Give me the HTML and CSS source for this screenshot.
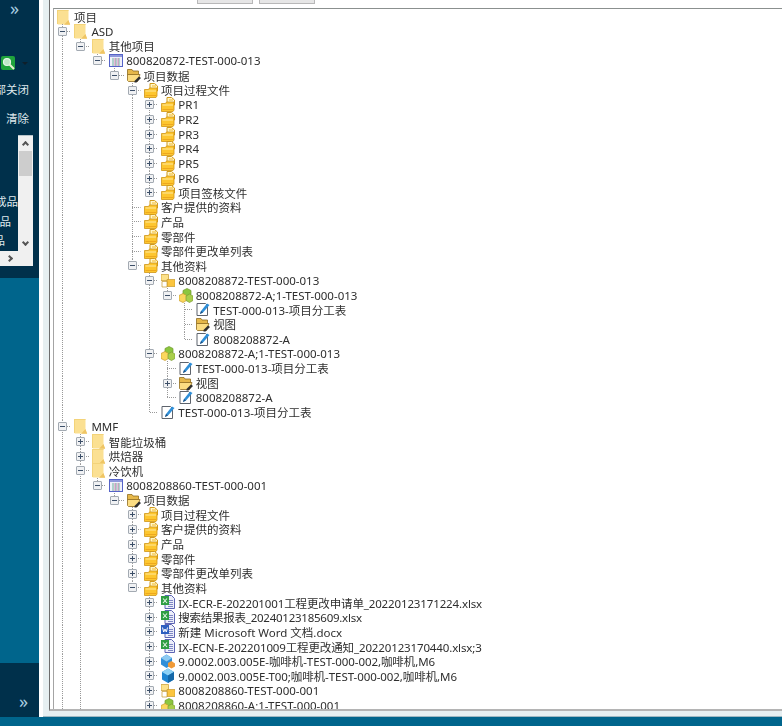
FILE: index.html
```html
<!DOCTYPE html>
<html lang="zh-CN">
<head>
    <meta charset="UTF-8">
    <title>项目</title>
    <link rel="stylesheet" href="styles.css">
</head>
<body>
    <!-- icons used by the tree -->
    <svg class="defs" xmlns="http://www.w3.org/2000/svg">
        <symbol id="pale" viewBox="0 0 14 15">
            <path d="M0 0h11.500v11l1.500 3.500H1l-1-1z" fill="#fbe092"/>
            <path d="M11.500 10l1.700 4.700H7z" fill="#efc564"/>
            <path d="M0 .5h11.500M.5 0v14" stroke="#f3d379" fill="none"/>
        </symbol>
        <symbol id="yellow" viewBox="0 0 14 15">
            <path d="M6 .5h4.500l3 2.500v5H6z" fill="#fff6c8" stroke="#d19a1c"/>
            <path d="M8 3h4" stroke="#f4b82c"/>
            <path d="M.5 6.500h4l1-1.500h7.500v8l-1 1.500H.5z" fill="#fdc62f" stroke="#cf9618" stroke-width=".8"/>
            <path d="M1.500 8h10.500" stroke="#ffeaa0"/>
            <path d="M1.500 12.500h10.500" stroke="#eea81e"/>
        </symbol>
        <symbol id="open" viewBox="0 0 14 15">
            <path d="M.5 1.500h4.500l1 1.500h5.500v4H.5z" fill="#e6b84a" stroke="#8f6c20" stroke-width=".8"/>
            <path d="M.5 12.500V6.500h12.500l-2.500 7H1.500z" fill="#fcdd82" stroke="#8f6c20" stroke-width=".8"/>
            <path d="M7.500 13l4.500-4.500 2 1.500-4.500 4.500H7.500z" fill="#2f2f2f"/>
        </symbol>
        <symbol id="proj" viewBox="0 0 14 15">
            <rect x=".5" y="1.500" width="13" height="12" fill="#eef0fa" stroke="#5563c8"/>
            <path d="M1 2h12v2H1z" fill="#8d97dc"/>
            <path d="M3 6h9M3 8h9M3 10h9M3 12h9" stroke="#6fb49c" stroke-dasharray="2 1"/>
            <path d="M6 5v8M9 5v8" stroke="#d070a8" stroke-width=".8"/>
        </symbol>
        <symbol id="ybox" viewBox="0 0 14 15">
            <path d="M0 1.500h7.500v6H0z" fill="#fde28a" stroke="#c69a2c" stroke-width=".7"/>
            <path d="M6 6.500h8v7H6z" fill="#fbc53f" stroke="#c69a2c" stroke-width=".7"/>
            <path d="M1 8.500h5v5.500H1z" fill="#fff" stroke="#c69a2c" stroke-width=".7"/>
        </symbol>
        <symbol id="gbox" viewBox="0 0 14 15">
            <path d="M4 2.500l4-2 4 2v4l-4 2-4-2z" fill="#8cc63f" stroke="#6d9a2c" stroke-width=".7"/>
            <path d="M0 7.500l4-2 3.500 2v5l-3.500 2-4-2z" fill="#fbd75e" stroke="#c69a2c" stroke-width=".7"/>
            <path d="M7 8l3.500-2 3.500 2v4.500l-3.500 2L7 12.500z" fill="#a9cf4b" stroke="#7c9c34" stroke-width=".7"/>
        </symbol>
        <symbol id="doc" viewBox="0 0 14 15">
            <path d="M1 1.500h8.500l2 2v10H1z" fill="#fff" stroke="#5d636c"/>
            <path d="M4 12l1-3 6-7.500 2.500 1.500-6.500 7.500z" fill="#2f8fd8"/>
            <path d="M4 12l1-3 2 1.500z" fill="#1d4f80"/>
        </symbol>
        <symbol id="xls" viewBox="0 0 14 15">
            <path d="M4 .5h6.500l3 3v10H4z" fill="#eceefa" stroke="#5d65b4"/>
            <path d="M7 5.500h5M7 7.500h5M7 9.500h5M7 11.500h5" stroke="#7f88c4"/>
            <rect x="0" y="1" width="8" height="9" fill="#2f9e44"/>
            <path d="M2 3.500l4 4.500M6 3.500l-4 4.500" stroke="#e8f6ea" stroke-width="1.100"/>
        </symbol>
        <symbol id="word" viewBox="0 0 14 15">
            <path d="M4 .5h6.500l3 3v10H4z" fill="#eceefa" stroke="#5d65b4"/>
            <path d="M7 5.500h5M7 7.500h5M7 9.500h5M7 11.500h5" stroke="#7f88c4"/>
            <rect x="0" y="1" width="8" height="9" fill="#2d5fc0"/>
            <path d="M1.500 3.500l1.200 4.500 1.300-3 1.300 3 1.200-4.500" stroke="#fff" fill="none"/>
        </symbol>
        <symbol id="part" viewBox="0 0 14 15">
            <path d="M0 4l5.500-3.500L11 4v6.500l-5.500 3.500L0 10.500z" fill="#2f8ed8"/>
            <path d="M0 4l5.500 3.500L11 4 5.500.5z" fill="#8ccaf2"/>
            <path d="M7 9l3.500-2 3.500 2.500v3l-3.500 2-3.500-2z" fill="#f09a38"/>
        </symbol>
        <symbol id="cube" viewBox="0 0 14 15">
            <path d="M1 4l6-3.500L13 4v7.500L7 15l-6-3.500z" fill="#1f86d2"/>
            <path d="M1 4l6 3.500L13 4 7 .5z" fill="#8ed2f6"/>
            <path d="M7 7.500V15l6-3.500V4z" fill="#1568a8"/>
        </symbol>
    </svg>

    <div class="screen">
        <aside class="sidebar">
            <div class="side-top">
                <div class="chevrons">»</div>
                <div class="tool-search">
                    <svg class="search-icon" viewBox="0 0 14 14">
                        <rect width="14" height="14" rx="2" fill="#1fa33c"/>
                        <circle cx="6" cy="6" r="3.500" fill="#bfe8c8" stroke="#e8f6ea" stroke-width="1.200"/>
                        <path d="M8.500 8.500l4.500 4.500" stroke="#e8f0d0" stroke-width="2"/>
                    </svg>
                    <span class="caret"></span>
                </div>
                <div class="side-btn close-all">全部关闭</div>
                <div class="side-btn clear">清除</div>
                <div class="list-box">
                    <div class="list-main">
                        <div class="list-items">
                            <div class="item-a">半成品</div>
                            <div class="item-b">半成品</div>
                            <div class="item-c">半成品</div>
                        </div>
                        <div class="vscroll">
                            <span class="arrow up"></span>
                            <span class="thumb"></span>
                            <span class="arrow down"></span>
                        </div>
                    </div>
                    <div class="hscroll"><span class="arrow right"></span></div>
                </div>
            </div>
            <div class="side-mid"></div>
            <div class="side-foot">»</div>
        </aside>

        <main class="content">
            <div class="pane">
                <div class="pane-inner">
                    <div class="toolbar">
                        <span class="tool-btn"></span>
                        <span class="tool-btn"></span>
                    </div>
                    <div class="tree">
                        <div class="row root"><svg class="ic"><use href="#pale"/></svg><span>项目</span></div>
                        <div class="row"><i class="tee"><b class="minus"></b></i><svg class="ic"><use href="#pale"/></svg><span>ASD</span></div>
                        <div class="row"><i class="v"></i><i class="last"><b class="minus"></b></i><svg class="ic"><use href="#pale"/></svg><span>其他项目</span></div>
                        <div class="row"><i class="v"></i><i></i><i class="last"><b class="minus"></b></i><svg class="ic"><use href="#proj"/></svg><span>800820872-TEST-000-013</span></div>
                        <div class="row"><i class="v"></i><i></i><i></i><i class="last"><b class="minus"></b></i><svg class="ic"><use href="#open"/></svg><span>项目数据</span></div>
                        <div class="row"><i class="v"></i><i></i><i></i><i></i><i class="tee"><b class="minus"></b></i><svg class="ic"><use href="#yellow"/></svg><span>项目过程文件</span></div>
                        <div class="row"><i class="v"></i><i></i><i></i><i></i><i class="v"></i><i class="tee"><b class="plus"></b></i><svg class="ic"><use href="#yellow"/></svg><span>PR1</span></div>
                        <div class="row"><i class="v"></i><i></i><i></i><i></i><i class="v"></i><i class="tee"><b class="plus"></b></i><svg class="ic"><use href="#yellow"/></svg><span>PR2</span></div>
                        <div class="row"><i class="v"></i><i></i><i></i><i></i><i class="v"></i><i class="tee"><b class="plus"></b></i><svg class="ic"><use href="#yellow"/></svg><span>PR3</span></div>
                        <div class="row"><i class="v"></i><i></i><i></i><i></i><i class="v"></i><i class="tee"><b class="plus"></b></i><svg class="ic"><use href="#yellow"/></svg><span>PR4</span></div>
                        <div class="row"><i class="v"></i><i></i><i></i><i></i><i class="v"></i><i class="tee"><b class="plus"></b></i><svg class="ic"><use href="#yellow"/></svg><span>PR5</span></div>
                        <div class="row"><i class="v"></i><i></i><i></i><i></i><i class="v"></i><i class="tee"><b class="plus"></b></i><svg class="ic"><use href="#yellow"/></svg><span>PR6</span></div>
                        <div class="row"><i class="v"></i><i></i><i></i><i></i><i class="v"></i><i class="last"><b class="plus"></b></i><svg class="ic"><use href="#yellow"/></svg><span>项目签核文件</span></div>
                        <div class="row"><i class="v"></i><i></i><i></i><i></i><i class="tee"></i><svg class="ic"><use href="#yellow"/></svg><span>客户提供的资料</span></div>
                        <div class="row"><i class="v"></i><i></i><i></i><i></i><i class="tee"></i><svg class="ic"><use href="#yellow"/></svg><span>产品</span></div>
                        <div class="row"><i class="v"></i><i></i><i></i><i></i><i class="tee"></i><svg class="ic"><use href="#yellow"/></svg><span>零部件</span></div>
                        <div class="row"><i class="v"></i><i></i><i></i><i></i><i class="tee"></i><svg class="ic"><use href="#yellow"/></svg><span>零部件更改单列表</span></div>
                        <div class="row"><i class="v"></i><i></i><i></i><i></i><i class="last"><b class="minus"></b></i><svg class="ic"><use href="#yellow"/></svg><span>其他资料</span></div>
                        <div class="row"><i class="v"></i><i></i><i></i><i></i><i></i><i class="tee"><b class="minus"></b></i><svg class="ic"><use href="#ybox"/></svg><span>8008208872-TEST-000-013</span></div>
                        <div class="row"><i class="v"></i><i></i><i></i><i></i><i></i><i class="v"></i><i class="last"><b class="minus"></b></i><svg class="ic"><use href="#gbox"/></svg><span>8008208872-A;1-TEST-000-013</span></div>
                        <div class="row"><i class="v"></i><i></i><i></i><i></i><i></i><i class="v"></i><i></i><i class="tee"></i><svg class="ic"><use href="#doc"/></svg><span>TEST-000-013-项目分工表</span></div>
                        <div class="row"><i class="v"></i><i></i><i></i><i></i><i></i><i class="v"></i><i></i><i class="tee"></i><svg class="ic"><use href="#open"/></svg><span>视图</span></div>
                        <div class="row"><i class="v"></i><i></i><i></i><i></i><i></i><i class="v"></i><i></i><i class="last"></i><svg class="ic"><use href="#doc"/></svg><span>8008208872-A</span></div>
                        <div class="row"><i class="v"></i><i></i><i></i><i></i><i></i><i class="tee"><b class="minus"></b></i><svg class="ic"><use href="#gbox"/></svg><span>8008208872-A;1-TEST-000-013</span></div>
                        <div class="row"><i class="v"></i><i></i><i></i><i></i><i></i><i class="v"></i><i class="tee"></i><svg class="ic"><use href="#doc"/></svg><span>TEST-000-013-项目分工表</span></div>
                        <div class="row"><i class="v"></i><i></i><i></i><i></i><i></i><i class="v"></i><i class="tee"><b class="plus"></b></i><svg class="ic"><use href="#open"/></svg><span>视图</span></div>
                        <div class="row"><i class="v"></i><i></i><i></i><i></i><i></i><i class="v"></i><i class="last"></i><svg class="ic"><use href="#doc"/></svg><span>8008208872-A</span></div>
                        <div class="row"><i class="v"></i><i></i><i></i><i></i><i></i><i class="last"></i><svg class="ic"><use href="#doc"/></svg><span>TEST-000-013-项目分工表</span></div>
                        <div class="row"><i class="tee"><b class="minus"></b></i><svg class="ic"><use href="#pale"/></svg><span>MMF</span></div>
                        <div class="row"><i class="v"></i><i class="tee"><b class="plus"></b></i><svg class="ic"><use href="#pale"/></svg><span>智能垃圾桶</span></div>
                        <div class="row"><i class="v"></i><i class="tee"><b class="plus"></b></i><svg class="ic"><use href="#pale"/></svg><span>烘焙器</span></div>
                        <div class="row"><i class="v"></i><i class="tee"><b class="minus"></b></i><svg class="ic"><use href="#pale"/></svg><span>冷饮机</span></div>
                        <div class="row"><i class="v"></i><i class="v"></i><i class="last"><b class="minus"></b></i><svg class="ic"><use href="#proj"/></svg><span>8008208860-TEST-000-001</span></div>
                        <div class="row"><i class="v"></i><i class="v"></i><i></i><i class="last"><b class="minus"></b></i><svg class="ic"><use href="#open"/></svg><span>项目数据</span></div>
                        <div class="row"><i class="v"></i><i class="v"></i><i></i><i></i><i class="tee"><b class="plus"></b></i><svg class="ic"><use href="#yellow"/></svg><span>项目过程文件</span></div>
                        <div class="row"><i class="v"></i><i class="v"></i><i></i><i></i><i class="tee"><b class="plus"></b></i><svg class="ic"><use href="#yellow"/></svg><span>客户提供的资料</span></div>
                        <div class="row"><i class="v"></i><i class="v"></i><i></i><i></i><i class="tee"><b class="plus"></b></i><svg class="ic"><use href="#yellow"/></svg><span>产品</span></div>
                        <div class="row"><i class="v"></i><i class="v"></i><i></i><i></i><i class="tee"><b class="plus"></b></i><svg class="ic"><use href="#yellow"/></svg><span>零部件</span></div>
                        <div class="row"><i class="v"></i><i class="v"></i><i></i><i></i><i class="tee"><b class="plus"></b></i><svg class="ic"><use href="#yellow"/></svg><span>零部件更改单列表</span></div>
                        <div class="row"><i class="v"></i><i class="v"></i><i></i><i></i><i class="last"><b class="minus"></b></i><svg class="ic"><use href="#yellow"/></svg><span>其他资料</span></div>
                        <div class="row"><i class="v"></i><i class="v"></i><i></i><i></i><i></i><i class="tee"><b class="plus"></b></i><svg class="ic"><use href="#xls"/></svg><span class="tight">IX-ECR-E-202201001工程更改申请单_20220123171224.xlsx</span></div>
                        <div class="row"><i class="v"></i><i class="v"></i><i></i><i></i><i></i><i class="tee"><b class="plus"></b></i><svg class="ic"><use href="#xls"/></svg><span class="tighter">搜索结果报表_20240123185609.xlsx</span></div>
                        <div class="row"><i class="v"></i><i class="v"></i><i></i><i></i><i></i><i class="tee"><b class="plus"></b></i><svg class="ic"><use href="#word"/></svg><span>新建 Microsoft Word 文档.docx</span></div>
                        <div class="row"><i class="v"></i><i class="v"></i><i></i><i></i><i></i><i class="tee"><b class="plus"></b></i><svg class="ic"><use href="#xls"/></svg><span class="tight">IX-ECN-E-202201009工程更改通知_20220123170440.xlsx;3</span></div>
                        <div class="row"><i class="v"></i><i class="v"></i><i></i><i></i><i></i><i class="tee"><b class="plus"></b></i><svg class="ic"><use href="#part"/></svg><span class="snug">9.0002.003.005E-咖啡机-TEST-000-002,咖啡机,M6</span></div>
                        <div class="row"><i class="v"></i><i class="v"></i><i></i><i></i><i></i><i class="tee"><b class="plus"></b></i><svg class="ic"><use href="#cube"/></svg><span class="snug">9.0002.003.005E-T00;咖啡机-TEST-000-002,咖啡机,M6</span></div>
                        <div class="row"><i class="v"></i><i class="v"></i><i></i><i></i><i></i><i class="tee"><b class="plus"></b></i><svg class="ic"><use href="#ybox"/></svg><span>8008208860-TEST-000-001</span></div>
                        <div class="row"><i class="v"></i><i class="v"></i><i></i><i></i><i></i><i class="tee"><b class="plus"></b></i><svg class="ic"><use href="#gbox"/></svg><span>8008208860-A;1-TEST-000-001</span></div>
                    </div>
                </div>
            </div>
        </main>
        <div class="status-bar"></div>
    </div>
</body>
</html>
```

FILE: styles.css
```css
body {
    margin: 0;
    background: #fff;
    font-family: "Noto Sans", "Noto Sans CJK SC", sans-serif;
    font-size: 11.5px;
    color: #2e2e2e;
    overflow: hidden;
}

.defs {
    display: none;
}

.screen {
    display: grid;
    grid-template-columns: 39px 1fr;
    grid-template-rows: 717px 9px;
    width: 782px;
    height: 726px;
    overflow: hidden;
}

/* left bar */
.sidebar {
    display: flex;
    flex-direction: column;
    overflow: hidden;
    color: #dfe8ec;
}

.side-top {
    height: 278px;
    background: #00304b;
}

.chevrons, .side-foot {
    font-size: 18px;
    line-height: 17px;
    color: #a8cde0;
}

.chevrons {
    padding-left: 10px;
}

.tool-search {
    display: flex;
    align-items: center;
    gap: 7px;
    margin: 39px 0 0 1px;
    height: 14px;
}

.search-icon {
    width: 14px;
    height: 14px;
}

.caret {
    width: 0;
    height: 0;
    border: 3px solid transparent;
    border-top-color: #0e1f2a;
    border-bottom: 0;
}

.side-btn {
    white-space: nowrap;
    line-height: 16px;
}

.close-all {
    margin: 12px 0 0 -17px;
}

.clear {
    margin: 13px 0 0 6px;
}

.list-box {
    margin-top: 8px;
    width: 33px;
    height: 131px;
    overflow: hidden;
}

.list-main {
    display: flex;
    height: 116px;
}

.list-items {
    width: 18px;
    padding-top: 57px;
    line-height: 19.5px;
    white-space: nowrap;
    overflow: hidden;
    flex: none;
}

.item-a {
    margin-left: -16.500px;
}

.item-b {
    margin-left: -23.500px;
}

.item-c {
    margin-left: -29.500px;
}

.vscroll {
    display: flex;
    flex-direction: column;
    align-items: center;
    width: 15px;
    flex: none;
    background: #f0f0f0;
    border-top: 1px solid #b8c4ca;
    box-sizing: border-box;
}

.thumb {
    width: 13px;
    height: 25px;
    margin-top: 4px;
    background: #cdcdcd;
}

.arrow {
    width: 5px;
    height: 5px;
    border: solid #555;
    border-width: 2px 0 0 2px;
    box-sizing: border-box;
}

.arrow.up {
    margin-top: 6px;
    transform: rotate(45deg);
}

.arrow.down {
    margin-top: 64px;
    transform: rotate(225deg);
}

.arrow.right {
    transform: rotate(135deg);
}

.hscroll {
    display: flex;
    align-items: center;
    padding-left: 7px;
    height: 15px;
    background: #f0f0f0;
}

.side-mid {
    flex: 1;
    background: #00658c;
}

.side-foot {
    height: 54px;
    box-sizing: border-box;
    padding: 30px 0 0 19px;
    background: #00304b;
}

/* frame round the tree */
.content {
    display: flex;
    flex-direction: column;
    min-width: 0;
    border-left: 4px solid #fff;
}

.pane {
    flex: 1;
    min-height: 0;
    background: #e6eff1;
    padding: 0 0 5px 6px;
    border-bottom: 1px solid #9fb8c2;
}

.pane-inner {
    height: 100%;
    box-sizing: border-box;
    background: #fff;
    border-left: 1px solid #6e6e6e;
    border-bottom: 2px solid #b4b4b4;
    padding-left: 3px;
    display: flex;
    flex-direction: column;
}

.toolbar {
    display: flex;
    gap: 6px;
    height: 8px;
    flex: none;
    padding-left: 144px;
}

.tool-btn {
    width: 54px;
    height: 3px;
    background: #e6e6e6;
    border: solid #b8b8b8;
    border-width: 0 1px 1px;
}

.tree {
    flex: 1;
    min-height: 0;
    overflow: hidden;
    box-sizing: border-box;
    border-top: 1px solid #8b908f;
    border-left: 1px solid #a4a4a4;
    padding-top: 0.7px;
    filter: blur(0.3px);
}

.row {
    display: flex;
    align-items: center;
    height: 14.65px;
    white-space: nowrap;
}

.row.root .ic {
    margin-left: 3px;
}

.row i {
    display: flex;
    align-items: center;
    justify-content: center;
    flex: 0 0 17.4px;
    height: 100%;
}

.row i.v {
    background: repeating-linear-gradient(#999 0 1px, transparent 1px 2px) center / 1px 100% no-repeat;
}

.row i.tee {
    background:
        repeating-linear-gradient(#999 0 1px, transparent 1px 2px) center / 1px 100% no-repeat,
        repeating-linear-gradient(90deg, #999 0 1px, transparent 1px 2px) right center / 50% 1px no-repeat;
}

.row i.last {
    background:
        repeating-linear-gradient(#999 0 1px, transparent 1px 2px) center top / 1px 50% no-repeat,
        repeating-linear-gradient(90deg, #999 0 1px, transparent 1px 2px) right center / 50% 1px no-repeat;
}

.plus, .minus {
    display: block;
    width: 9px;
    height: 9px;
    box-sizing: border-box;
    border: 1px solid #a3aab2;
    border-radius: 1px;
}

.minus {
    background:
        linear-gradient(#3c4f68, #3c4f68) center / 5px 1px no-repeat,
        #f0f1f3;
}

.plus {
    background:
        linear-gradient(#3c4f68, #3c4f68) center / 5px 1px no-repeat,
        linear-gradient(#3c4f68, #3c4f68) center / 1px 5px no-repeat,
        #f0f1f3;
}

.ic {
    flex: none;
    width: 14px;
    height: 15px;
    margin: 0 3px;
}

.tight {
    letter-spacing: -0.13px;
}

.tighter {
    letter-spacing: -0.25px;
}

.snug {
    letter-spacing: -0.07px;
}

.status-bar {
    grid-column: 1 / 3;
    background: #00658c;
}
```
